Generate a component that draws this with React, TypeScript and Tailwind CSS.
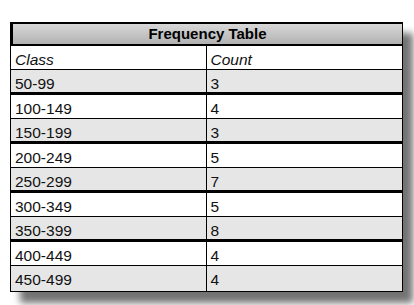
const rows = [
  ["50-99", "3"],
  ["100-149", "4"],
  ["150-199", "3"],
  ["200-249", "5"],
  ["250-299", "7"],
  ["300-349", "5"],
  ["350-399", "8"],
  ["400-449", "4"],
  ["450-499", "4"],
];

export default function App() {
  return (
    <div
      className="w-[414px] h-[305px] bg-white overflow-hidden pt-[22px] pl-[10px]"
      style={{ fontFamily: '"Liberation Sans", Arial, sans-serif' }}
    >
      <div className="w-[393px] border border-t-2 border-black bg-white shadow-[10px_11px_7px_rgba(0,0,0,0.55)] text-[15.5px] text-[#111]">
        <div className="h-[22px] border-l-2 border-black border-b-2 bg-gradient-to-b from-[#d8d8d8] to-[#b2b2b2] flex items-center justify-center font-bold text-[15px] text-black pt-px">
          Frequency Table
        </div>
        <div className="grid grid-cols-2 h-[24px] border-b border-black italic">
          <div className="pl-1 pt-0.5 flex items-center border-r border-black">Class</div>
          <div className="pl-1 pt-0.5 flex items-center">Count</div>
        </div>
        {rows.map(([cls, count], i) => {
          const gray = i % 2 === 0;
          const last = i === rows.length - 1;
          return (
            <div
              key={cls}
              className={`grid grid-cols-2 ${gray ? "bg-[#e6e6e6] h-[25px]" : "bg-white h-[24px]"} ${
                last ? "" : gray ? "border-b-[3px] border-black" : "border-b border-black"
              }`}
            >
              <div className="pl-1 pt-0.5 flex items-center border-r border-black">{cls}</div>
              <div className="pl-1 pt-0.5 flex items-center">{count}</div>
            </div>
          );
        })}
      </div>
    </div>
  );
}
